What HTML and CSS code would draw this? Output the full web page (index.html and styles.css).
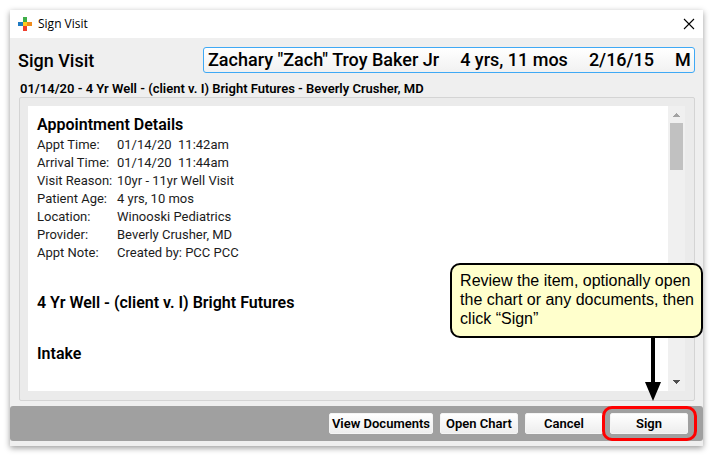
FILE: index.html
```html
<!DOCTYPE html>
<html lang="en">
  <head>
    <meta charset="UTF-8" />
    <meta name="viewport" content="width=device-width, initial-scale=1" />
    <title>Sign Visit</title>
    <link rel="stylesheet" href="styles.css">
  </head>
  <body>
    <div class="window">
      <div class="titlebar">
        <svg class="logo" width="14" height="14" viewBox="0 0 14 14" shape-rendering="crispEdges">
          <rect x="5" y="0" width="4" height="5" fill="#3fae49" />
          <rect x="0" y="5" width="5" height="4" fill="#1f7ac2" />
          <rect x="9" y="5" width="5" height="4" fill="#ef8c1d" />
          <rect x="5" y="9" width="4" height="5" fill="#ef3e2d" />
          <rect x="5" y="5" width="4" height="4" fill="#ffc91f" />
        </svg>
        <span class="caption">Sign Visit</span>
        <button class="close" type="button" aria-label="Close">
          <svg width="12" height="12" viewBox="0 0 12 12">
            <path d="M1 1l10 10M11 1L1 11" stroke="#000" stroke-width="1.1" fill="none" />
          </svg>
        </button>
      </div>

      <div class="header">
        <h1>Sign Visit</h1>
        <div class="patient">
          <span class="name">Zachary "Zach" Troy Baker Jr</span>
          <span>4 yrs, 11 mos</span>
          <span>2/16/15</span>
          <span>M</span>
        </div>
      </div>

      <p class="visit">01/14/20 - 4 Yr Well - (client v. I) Bright Futures - Beverly Crusher, MD</p>

      <div class="frame">
        <div class="report">
          <h2>Appointment Details</h2>
          <table class="details">
            <tr><th scope="row">Appt Time:</th><td>01/14/20&nbsp; 11:42am</td></tr>
            <tr><th scope="row">Arrival Time:</th><td>01/14/20&nbsp; 11:44am</td></tr>
            <tr><th scope="row">Visit Reason:</th><td>10yr - 11yr Well Visit</td></tr>
            <tr><th scope="row">Patient Age:</th><td>4 yrs, 10 mos</td></tr>
            <tr><th scope="row">Location:</th><td>Winooski Pediatrics</td></tr>
            <tr><th scope="row">Provider:</th><td>Beverly Crusher, MD</td></tr>
            <tr><th scope="row">Appt Note:</th><td>Created by: PCC PCC</td></tr>
          </table>
          <h2>4 Yr Well - (client v. I) Bright Futures</h2>
          <h2>Intake</h2>
        </div>
        <div class="scrollbar">
          <svg width="7" height="4" viewBox="0 0 7 4" shape-rendering="crispEdges">
            <path d="M3 0h1v1h1v1h1v1h1v1H0V3h1V2h1V1h1z" fill="#a3a3a3" />
          </svg>
          <div class="thumb"></div>
          <svg width="7" height="4" viewBox="0 0 7 4" shape-rendering="crispEdges">
            <path d="M0 0h7v1H6v1H5v1H4v1H3V3H2V2H1V1H0z" fill="#505050" />
          </svg>
        </div>
      </div>

      <div class="footer">
        <button class="btn" type="button">View Documents</button>
        <button class="btn" type="button">Open Chart</button>
        <button class="btn" type="button">Cancel</button>
        <div class="sign">
          <button class="btn" type="button" aria-describedby="signHelp">Sign</button>
          <div class="ring"></div>
          <div class="callout" id="signHelp">
            Review the item, optionally open<br>the chart or any documents, then<br>click “Sign”
          </div>
          <svg class="arrow" width="16" height="64" viewBox="0 0 16 64">
            <path d="M6 0h4v45h6L8 64 0 45h6z" fill="#000" />
          </svg>
        </div>
      </div>
    </div>
  </body>
</html>
```
FILE: styles.css
```css
* {
  box-sizing: border-box;
}

body {
  display: flex;
  min-height: 100vh;
  margin: 0;
  padding: 10px;
  background: #fff;
  color: #000;
  font-family: Roboto, "Liberation Sans", sans-serif;
  font-size: 13px;
}

h1,
h2,
p {
  margin: 0;
  font-weight: 500;
}

.window {
  flex: 1;
  display: flex;
  flex-direction: column;
  min-width: 0;
  padding-bottom: 5px;
  background: #efefef;
  box-shadow: 0 2px 6px rgba(0, 0, 0, 0.4);
}

.titlebar {
  display: flex;
  align-items: center;
  gap: 6px;
  height: 28px;
  padding: 0 8px;
  background: #fff;
}

.caption {
  flex: 1;
  font-family: "Open Sans", "Noto Sans", sans-serif;
  font-size: 12px;
  line-height: 16px;
}

.close {
  display: flex;
  padding: 0;
  border: none;
  background: none;
  cursor: pointer;
}

.header {
  display: flex;
  align-items: center;
  justify-content: space-between;
  padding: 9px 8px 0;
}

h1 {
  font-size: 18px;
}

.patient {
  display: flex;
  gap: 21px;
  width: 492px;
  padding: 0 4px;
  border: 1px solid #3fa9f5;
  border-radius: 3px;
  background: linear-gradient(#fff, #f1f1f1);
  font-size: 18px;
  font-weight: 500;
  line-height: 24px;
  white-space: nowrap;
}

.patient .name {
  flex: 1;
}

.visit {
  padding: 8px 10px 0;
  font-weight: 600;
  line-height: 16px;
}

.frame {
  flex: 1;
  display: flex;
  margin: 0 8px 5px 9px;
  padding: 8px 9px 9px 8px;
  border: 1px solid #d4d4d4;
  border-radius: 2px;
  background: #ebebeb;
}

.report {
  flex: 1;
  padding: 8px 9px 20px;
  background: #fff;
}

h2 {
  font-size: 16px;
  font-weight: 600;
  line-height: 22px;
}

.details {
  margin-bottom: 30px;
  border-collapse: collapse;
  color: #1c1c1c;
  line-height: 18px;
}

.details + h2 {
  margin-bottom: 29px;
}

.details th,
.details td {
  padding: 0;
  font-weight: 400;
  text-align: left;
  white-space: nowrap;
}

.details th {
  width: 80px;
}

.scrollbar {
  display: flex;
  flex-direction: column;
  align-items: center;
  width: 17px;
  padding: 7px 0;
  background: #f0f0f0;
}

.thumb {
  width: 13px;
  height: 47px;
  margin: 6px 0 auto;
  background: #c1c1c1;
}

.footer {
  display: flex;
  justify-content: flex-end;
  gap: 7px;
  padding: 7px 15px 7px 8px;
  border-radius: 3px;
  background: #a0a0a0;
}

.btn {
  min-width: 78px;
  height: 21px;
  padding: 0 2px;
  border: 1px solid #f4f4f4;
  border-radius: 2px;
  background: linear-gradient(#fff, #ededed);
  color: #000;
  font: 600 13px/19px Roboto, "Liberation Sans", sans-serif;
  cursor: pointer;
}

.sign {
  position: relative;
}

.ring {
  position: absolute;
  inset: -7px -9px -7px -8px;
  border: 3px solid #f00;
  border-radius: 10px;
  pointer-events: none;
}

/* help bubble that points down at the Sign button */
.callout {
  position: absolute;
  right: -15px;
  bottom: 96px;
  padding: 6px 7px 8px 8px;
  border: 2px solid #000;
  border-radius: 10px;
  background: #ffffcc;
  font-family: "Liberation Sans", Arial, sans-serif;
  font-size: 16px;
  line-height: 19px;
  white-space: nowrap;
}

.arrow {
  position: absolute;
  right: 27px;
  bottom: 33px;
}
```
